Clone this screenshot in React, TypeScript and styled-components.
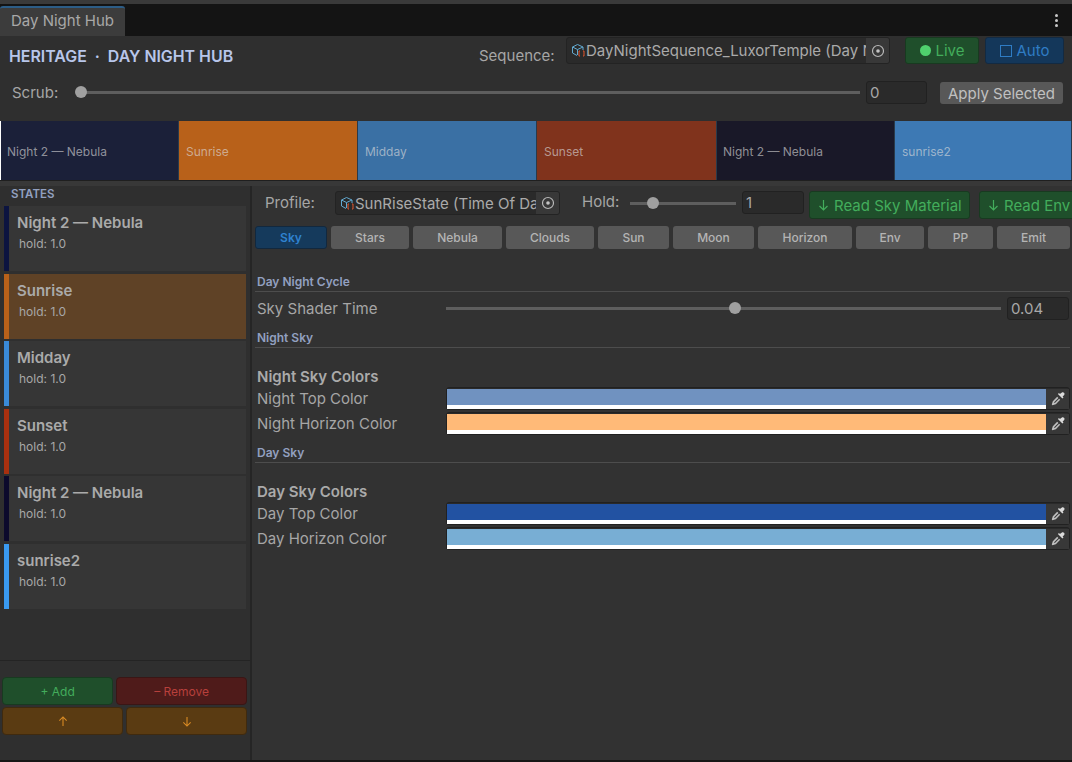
import React from "react";
import styled, { createGlobalStyle } from "styled-components";

const Global = createGlobalStyle`
  html, body { margin: 0; padding: 0; background: #323232; }
  body { font-family: Inter, "Noto Sans", sans-serif; color: #a9a9a9; }
  * { box-sizing: border-box; }
`;

const Window = styled.div`
  width: 1072px;
  height: 762px;
  overflow: hidden;
  display: flex;
  flex-direction: column;
  background: #323232;
  border-top: 4px solid #3a3a3a;
  border-bottom: 2px solid #161616;
`;

const TabBar = styled.div`
  height: 32px;
  flex: none;
  background: #141414;
  display: flex;
  align-items: flex-end;
  justify-content: space-between;
`;

const Tab = styled.div`
  width: 125px;
  height: 30px;
  background: #3c3c3c;
  border-top: 2px solid #2c5d87;
  border-radius: 3px 3px 0 0;
  font-size: 15px;
  color: #a8a8a8;
  padding-left: 11px;
  line-height: 26px;
`;

const MoreDots = styled.div`
  display: flex;
  flex-direction: column;
  gap: 2px;
  margin: 0 14px 9px 0;
  i {
    width: 3px;
    height: 3px;
    border-radius: 50%;
    background: #c8c8c8;
  }
`;

const Toolbar = styled.div`
  height: 85px;
  flex: none;
  background: #2f2f2f;
  display: flex;
  flex-direction: column;
`;

const TitleRow = styled.div`
  height: 38px;
  display: flex;
  align-items: flex-start;
  padding: 1px 8px 0 9px;
`;

const Title = styled.div`
  font-size: 15.9px;
  font-weight: 600;
  color: #b8c6ea;
  line-height: 40px;
  white-space: pre;
  flex: 1;
`;

const Label = styled.span<{ $w?: number }>`
  font-size: 15px;
  color: #a6a6a6;
  flex: none;
  width: ${(p) => (p.$w ? `${p.$w}px` : "auto")};
  white-space: nowrap;
`;

const SequenceLabel = styled(Label)`
  line-height: 38px;
`;

const ObjectField = styled.div<{ $w: number; $h: number }>`
  width: ${(p) => p.$w}px;
  height: ${(p) => p.$h}px;
  flex: none;
  display: flex;
  align-items: center;
  background: #2a2a2a;
  border: 1px solid #232323;
  border-radius: 3px;
  padding-left: 4px;
  font-size: 15px;
  color: #aaa;
  overflow: hidden;
  white-space: nowrap;
`;

const ObjectName = styled.span`
  flex: 1;
  overflow: hidden;
  min-width: 0;
  line-height: 20px;
  padding-top: 1px;
`;

const Picker = styled.div`
  width: 23px;
  align-self: stretch;
  flex: none;
  background: #383838;
  display: flex;
  align-items: center;
  justify-content: center;
`;

const ToggleBtn = styled.div<{ $blue?: boolean; $w: number; $ml: number }>`
  width: ${(p) => p.$w}px;
  height: 27px;
  margin-left: ${(p) => p.$ml}px;
  flex: none;
  border-radius: 3px;
  font-size: 15px;
  display: flex;
  align-items: center;
  justify-content: center;
  gap: 5px;
  background: ${(p) => (p.$blue ? "#14375a" : "#1f4f2b")};
  border: 1px solid ${(p) => (p.$blue ? "#132a42" : "#183a20")};
  color: ${(p) => (p.$blue ? "#2f7cc4" : "#43ad5c")};
`;

const LiveDot = styled.i`
  width: 11px;
  height: 11px;
  border-radius: 50%;
  background: #4fd06d;
`;

const AutoBox = styled.i`
  width: 12px;
  height: 12px;
  border: 1px solid #2f7cc4;
`;

const ScrubRow = styled.div`
  height: 36px;
  display: flex;
  align-items: center;
  padding: 0 9px 0 12px;
`;

const Track = styled.div<{ $w?: number; $pct: number; $ml?: number; $mr?: number }>`
  position: relative;
  height: 3px;
  background: #5e5e5e;
  flex: ${(p) => (p.$w ? "none" : 1)};
  width: ${(p) => (p.$w ? `${p.$w}px` : "auto")};
  margin: 0 ${(p) => p.$mr ?? 0}px 0 ${(p) => p.$ml ?? 0}px;
  &::after {
    content: "";
    position: absolute;
    top: -5px;
    left: calc(${(p) => p.$pct}% - 6px);
    width: 12px;
    height: 12px;
    border-radius: 50%;
    background: #a0a0a0;
  }
`;

const HoldTrack = styled(Track)`
  margin-top: 11px;
`;

const NumberInput = styled.div<{ $w: number }>`
  width: ${(p) => p.$w}px;
  height: 23px;
  flex: none;
  background: #2a2a2a;
  border: 1px solid #212121;
  border-radius: 3px;
  padding-left: 3px;
  font-size: 15px;
  line-height: 22px;
  color: #a8a8a8;
`;

const GreyBtn = styled.div`
  width: 123px;
  height: 22px;
  flex: none;
  background: #585858;
  border-radius: 3px;
  font-size: 15px;
  color: #c0c0c0;
  text-align: center;
  line-height: 23px;
  margin: 2px 0 0 13px;
`;

const Timeline = styled.div`
  height: 59px;
  flex: none;
  display: flex;
  padding-left: 1px;
  background: #fff;
`;

const Segment = styled.div<{ $bg: string; $w: number; $pad: number }>`
  width: ${(p) => p.$w}px;
  flex: none;
  background: ${(p) => p.$bg};
  border-right: 1px solid #2a3a4a;
  font-size: 12px;
  line-height: 61px;
  padding-left: ${(p) => p.$pad}px;
  color: rgba(220, 220, 220, 0.62);
  white-space: nowrap;
`;

const Separator = styled.div`
  height: 6px;
  flex: none;
  background: #383838;
  border-top: 1px solid #1f1f1f;
`;

const Body = styled.div`
  flex: 1;
  min-height: 0;
  display: flex;
`;

const Sidebar = styled.div`
  width: 252px;
  flex: none;
  background: #2f2f2f;
  border-right: 2px solid #252525;
  display: flex;
  flex-direction: column;
`;

const SideTitle = styled.div`
  height: 20px;
  padding-left: 11px;
  font-size: 11.5px;
  font-weight: 600;
  line-height: 16px;
  color: #92a0c0;
`;

const StateList = styled.div`
  flex: 1;
  display: flex;
  flex-direction: column;
  gap: 2.6px;
  padding: 0 4px;
`;

const StateCard = styled.div<{ $bar: string; $active?: boolean }>`
  height: 65px;
  flex: none;
  background: ${(p) => (p.$active ? "#5f4226" : "#363636")};
  border-left: 5px solid ${(p) => p.$bar};
  padding: 8px 0 0 8px;
`;

const StateName = styled.div`
  font-size: 15px;
  font-weight: 600;
  color: #aaa;
  line-height: 18px;
`;

const StateHold = styled.div`
  font-size: 12px;
  color: #a8a8a8;
  margin: 4px 0 0 2px;
  line-height: 15px;
`;

const SideFooter = styled.div`
  height: 100px;
  flex: none;
  border-top: 1px solid #242424;
  padding: 16px 3px 0 2px;
  display: flex;
  flex-direction: column;
  gap: 2px;
`;

const FooterRow = styled.div`
  display: flex;
  gap: 3px;
`;

const tones = {
  green: ["#1f4f2b", "#183a20", "#43ad5c"],
  red: ["#4f1b1a", "#3a1615", "#b8403c"],
  amber: ["#5a3b12", "#3f2a0f", "#d88a24"],
} as const;

const ActionBtn = styled.div<{ $tone: keyof typeof tones; $grow?: number }>`
  flex: ${(p) => p.$grow ?? 1} 1 0;
  height: 28px;
  border-radius: 4px;
  font-size: 12px;
  display: flex;
  align-items: center;
  justify-content: center;
  background: ${(p) => tones[p.$tone][0]};
  border: 1px solid ${(p) => tones[p.$tone][1]};
  color: ${(p) => tones[p.$tone][2]};
`;

const Main = styled.div`
  flex: 1;
  min-width: 0;
  overflow: hidden;
  display: flex;
  flex-direction: column;
  padding: 5px 2px 0 3px;
`;

const ProfileRow = styled.div`
  height: 28px;
  width: 900px;
  flex: none;
  display: flex;
  align-items: flex-start;
`;

const ProfileLabel = styled(Label)`
  padding-left: 10px;
  line-height: 24px;
`;

const HoldLabel = styled(Label)`
  margin-left: 22px;
  line-height: 22px;
`;

const HoldInput = styled(NumberInput)`
  margin-left: 6px;
`;

const ReadBtn = styled.div<{ $w: number; $ml: number }>`
  width: ${(p) => p.$w}px;
  margin-left: ${(p) => p.$ml}px;
  height: 28px;
  flex: none;
  border-radius: 3px;
  background: #1f4f2b;
  border: 1px solid #183a20;
  color: #43ad5c;
  font-size: 15px;
  display: flex;
  align-items: center;
  gap: 5px;
  padding-left: 8px;
  white-space: nowrap;
  overflow: hidden;
`;

const TabStrip = styled.div`
  height: 23px;
  flex: none;
  margin-top: 7px;
  display: flex;
  gap: 4px;
`;

const SectionTab = styled.div<{ $w: number; $on?: boolean }>`
  width: ${(p) => p.$w}px;
  flex: none;
  border-radius: 3px;
  font-size: 12px;
  font-weight: ${(p) => (p.$on ? 600 : 500)};
  text-align: center;
  line-height: ${(p) => (p.$on ? 21 : 23)}px;
  background: ${(p) => (p.$on ? "#153a5c" : "#585858")};
  color: ${(p) => (p.$on ? "#2f82d0" : "#b4b4b4")};
  border: ${(p) => (p.$on ? "1px solid #12283e" : "0")};
`;

const SectionHead = styled.div<{ $mt: number }>`
  margin-top: ${(p) => p.$mt}px;
  height: 17px;
  flex: none;
  border-bottom: 1px solid #4d4d4d;
  font-size: 12px;
  font-weight: 600;
  line-height: 13px;
  color: #92a0c0;
  padding-left: 2px;
`;

const FieldRow = styled.div<{ $mt?: number }>`
  height: 23px;
  flex: none;
  margin-top: ${(p) => p.$mt ?? 0}px;
  display: flex;
  align-items: center;
  padding-left: 2px;
`;

const TimeInput = styled(NumberInput)`
  margin-right: 1px;
`;

const GroupTitle = styled.div`
  font-size: 15px;
  font-weight: 600;
  color: #aaa;
  padding-left: 2px;
  margin-top: 20px;
  height: 18px;
  line-height: 18px;
  flex: none;
`;

const ColorField = styled.div`
  flex: none;
  width: 624px;
  height: 23px;
  display: flex;
  background: #2a2a2a;
  border: 1px solid #212121;
  border-radius: 3px;
  padding-top: 1px;
`;

const Swatch = styled.div<{ $c: string }>`
  flex: 1;
  background: linear-gradient(${(p) => p.$c} 0 16px, #fff 16px);
`;

const DropperBox = styled.div`
  width: 23px;
  display: flex;
  align-items: center;
  justify-content: center;
  background: #383838;
`;

const Cube = () => (
  <svg width="15" height="15" viewBox="0 0 15 15" fill="none" style={{ flex: "none" }}>
    <path d="M6.5 1.5 12 4v3M6.5 1.5 1.5 4v6l4.5 2.5M1.5 4l5 2.5L12 4M6.5 6.5V12" stroke="#62a9d0" strokeWidth="1" />
    <path d="M9 8H8v5h1M12 8h1v5h-1" stroke="#e0552c" strokeWidth="1" />
  </svg>
);

const Target = () => (
  <svg width="14" height="14" viewBox="0 0 14 14" fill="none">
    <circle cx="7" cy="7" r="5.5" stroke="#b8b8b8" strokeWidth="1.2" />
    <circle cx="7" cy="7" r="1.8" fill="#c4c4c4" />
  </svg>
);

const Dropper = () => (
  <svg width="16" height="16" viewBox="0 0 16 16">
    <path d="M11.6 1.8c.8-.8 1.8-.6 2.4 0 .6.6.8 1.6 0 2.4l-1.4 1.4.9.9-1.1 1.1-4.5-4.5 1.1-1.1.9.9z" fill="#dcdcdc" />
    <path d="M7.2 5.8 2.8 10.2 1.8 13.6l.6.6 3.4-1 4.4-4.4-1.1-1.1-4 4-1 .3.3-1 4-4z" fill="#c0c0c0" />
  </svg>
);

const Arrow = ({ up, small }: { up?: boolean; small?: boolean }) => (
  <svg
    width={small ? 10 : 11}
    height={small ? 11 : 12}
    viewBox="0 0 11 12"
    fill="none"
    stroke="currentColor"
    strokeWidth="1.2"
    style={{ flex: "none", transform: up ? "rotate(180deg)" : undefined }}
  >
    <path d="M5.5 1v10M1.5 7l4 4 4-4" />
  </svg>
);

const segments = [
  ["Night 2 — Nebula", "#1b2039", 178, 6],
  ["Sunrise", "#b8611a", 179, 7],
  ["Midday", "#3a70a4", 179, 7],
  ["Sunset", "#80331c", 180, 7],
  ["Night 2 — Nebula", "#191828", 178, 6],
  ["sunrise2", "#3d79b4", 177, 7],
] as const;

const states = [
  ["Night 2 — Nebula", "#0c1440"],
  ["Sunrise", "#b8611a"],
  ["Midday", "#3a8ad8"],
  ["Sunset", "#a8300f"],
  ["Night 2 — Nebula", "#0c0a2c"],
  ["sunrise2", "#3a9af0"],
] as const;

const sectionTabs = [
  ["Sky", 72],
  ["Stars", 78],
  ["Nebula", 89],
  ["Clouds", 88],
  ["Sun", 71],
  ["Moon", 81],
  ["Horizon", 94],
  ["Env", 68],
  ["PP", 65],
  ["Emit", 73],
] as const;

const ColorRow = ({ label, color, mt }: { label: string; color: string; mt?: number }) => (
  <FieldRow $mt={mt}>
    <Label $w={189}>{label}</Label>
    <ColorField>
      <Swatch $c={color} />
      <DropperBox>
        <Dropper />
      </DropperBox>
    </ColorField>
  </FieldRow>
);

export default function App() {
  return (
    <Window>
      <Global />
      <TabBar>
        <Tab>Day Night Hub</Tab>
        <MoreDots>
          <i />
          <i />
          <i />
        </MoreDots>
      </TabBar>
      <Toolbar>
        <TitleRow>
          <Title>HERITAGE  ·  DAY NIGHT HUB</Title>
          <SequenceLabel $w={87}>Sequence:</SequenceLabel>
          <ObjectField $w={324} $h={27}>
            <Cube />
            <ObjectName>DayNightSequence_LuxorTemple (Day N</ObjectName>
            <Picker>
              <Target />
            </Picker>
          </ObjectField>
          <ToggleBtn $w={74} $ml={15}>
            <LiveDot />
            Live
          </ToggleBtn>
          <ToggleBtn $blue $w={79} $ml={6}>
            <AutoBox />
            Auto
          </ToggleBtn>
        </TitleRow>
        <ScrubRow>
          <Label $w={63}>Scrub:</Label>
          <Track $pct={0} $ml={6} $mr={6} />
          <NumberInput $w={61}>0</NumberInput>
          <GreyBtn>Apply Selected</GreyBtn>
        </ScrubRow>
      </Toolbar>
      <Timeline>
        {segments.map(([name, bg, w, pad], i) => (
          <Segment key={i} $bg={bg} $w={w} $pad={pad}>
            {name}
          </Segment>
        ))}
      </Timeline>
      <Separator />
      <Body>
        <Sidebar>
          <SideTitle>STATES</SideTitle>
          <StateList>
            {states.map(([name, bar], i) => (
              <StateCard key={i} $bar={bar} $active={i === 1}>
                <StateName>{name}</StateName>
                <StateHold>hold: 1.0</StateHold>
              </StateCard>
            ))}
          </StateList>
          <SideFooter>
            <FooterRow>
              <ActionBtn $tone="green" $grow={111}>+ Add</ActionBtn>
              <ActionBtn $tone="red" $grow={131}>– Remove</ActionBtn>
            </FooterRow>
            <FooterRow>
              <ActionBtn $tone="amber"><Arrow up small /></ActionBtn>
              <ActionBtn $tone="amber"><Arrow small /></ActionBtn>
            </FooterRow>
          </SideFooter>
        </Sidebar>
        <Main>
          <ProfileRow>
            <ProfileLabel $w={80}>Profile:</ProfileLabel>
            <ObjectField $w={225} $h={24}>
              <Cube />
              <ObjectName>SunRiseState (Time Of Da</ObjectName>
              <Picker>
                <Target />
              </Picker>
            </ObjectField>
            <HoldLabel $w={48}>Hold:</HoldLabel>
            <HoldTrack $w={106} $pct={22} />
            <HoldInput $w={62}>1</HoldInput>
            <ReadBtn $w={161} $ml={5}><Arrow />Read Sky Material</ReadBtn>
            <ReadBtn $w={170} $ml={9}><Arrow />Read Env</ReadBtn>
          </ProfileRow>
          <TabStrip>
            {sectionTabs.map(([name, w], i) => (
              <SectionTab key={name} $w={w} $on={i === 0}>
                {name}
              </SectionTab>
            ))}
          </TabStrip>
          <SectionHead $mt={26}>Day Night Cycle</SectionHead>
          <FieldRow $mt={5}>
            <Label $w={189}>Sky Shader Time</Label>
            <Track $pct={52} $mr={6} />
            <TimeInput $w={62}>0.04</TimeInput>
          </FieldRow>
          <SectionHead $mt={11}>Night Sky</SectionHead>
          <GroupTitle>Night Sky Colors</GroupTitle>
          <ColorRow label="Night Top Color" color="#7092c0" mt={1} />
          <ColorRow label="Night Horizon Color" color="#ffba78" mt={2} />
          <SectionHead $mt={11}>Day Sky</SectionHead>
          <GroupTitle>Day Sky Colors</GroupTitle>
          <ColorRow label="Day Top Color" color="#2252a2" mt={1} />
          <ColorRow label="Day Horizon Color" color="#78aed4" mt={2} />
        </Main>
      </Body>
    </Window>
  );
}
